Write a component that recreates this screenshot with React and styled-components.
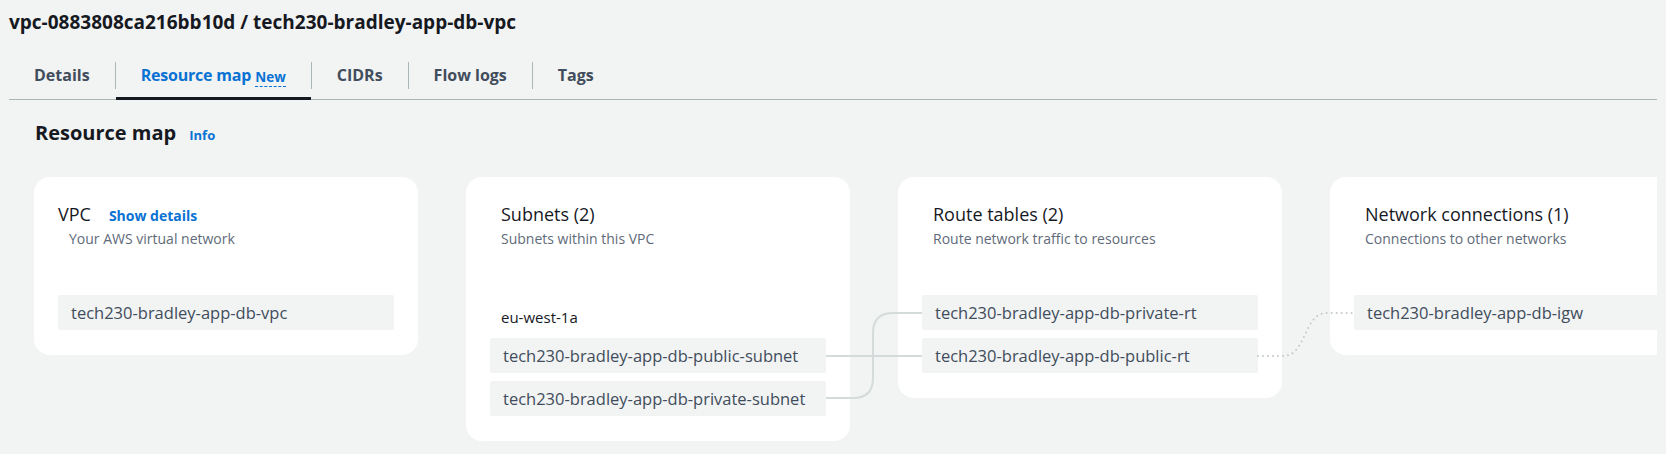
import React from 'react';
import styled, { createGlobalStyle } from 'styled-components';

const GlobalStyle = createGlobalStyle`
  body {
    margin: 0;
    background: #f2f3f3;
    font-family: "Open Sans", "Helvetica Neue", Arial, sans-serif;
    color: #16191f;
  }
`;

const Page = styled.div`
  padding: 0 9px;
  overflow: hidden;
`;

const Title = styled.h1`
  margin: 0;
  padding-top: 2px;
  height: 40px;
  line-height: 40px;
  font-size: 19px;
  font-weight: 700;
  color: #16191f;
`;

const TabBar = styled.div`
  display: flex;
  align-items: stretch;
  margin-top: 16px;
  height: 41px;
  border-bottom: 1px solid #aab7b8;
`;

const Tab = styled.div`
  display: flex;
  align-items: center;
  padding: 0 25px 6px;
  font-size: 16px;
  font-weight: 700;
  letter-spacing: ${p => (p.$active ? '-0.2px' : '0')};
  color: ${p => (p.$active ? '#0972d3' : '#414d5c')};
  border-bottom: 3px solid ${p => (p.$active ? '#16191f' : 'transparent')};
  margin-bottom: -1px;
`;

const Separator = styled.span`
  align-self: center;
  width: 1px;
  height: 27px;
  margin-bottom: 6px;
  background: #aab7b8;
`;

const NewBadge = styled.span`
  margin-left: 4px;
  margin-top: 6px;
  font-size: 13.5px;
  line-height: 17px;
  letter-spacing: 0;
  border-bottom: 1px dashed #0972d3;
`;

const SectionHeader = styled.div`
  display: flex;
  align-items: baseline;
  gap: 13px;
  padding: 19px 0 0 26px;
  height: 47px;
  box-sizing: border-box;
`;

const SectionTitle = styled.h2`
  margin: 0;
  font-size: 20px;
  font-weight: 700;
  color: #16191f;
`;

const Link = styled.a`
  font-size: ${p => p.$size || 13}px;
  font-weight: 700;
  color: #0972d3;
  text-decoration: none;
`;

const MapArea = styled.div`
  position: relative;
  margin-top: 30px;
  overflow: hidden;
  height: 270px;
`;

const CardRow = styled.div`
  display: flex;
  align-items: flex-start;
  gap: 48px;
  padding-left: 25px;
  width: max-content;
`;

const Card = styled.div`
  width: 384px;
  box-sizing: border-box;
  background: #ffffff;
  border-radius: 16px;
  padding: 26px 24px 25px;
`;

const CardHeader = styled.div`
  height: 92px;
  padding-left: ${p => (p.$flush ? '0' : '11px')};
`;

const CardTitleRow = styled.div`
  display: flex;
  align-items: baseline;
  gap: 18px;
`;

const CardTitle = styled.div`
  font-size: 18px;
  line-height: 22px;
  color: #16191f;
`;

const CardSubtitle = styled.div`
  margin-top: 5px;
  padding-left: ${p => (p.$indent ? '11px' : '0')};
  font-size: 14px;
  line-height: 18px;
  color: #5f6b7a;
`;

const ItemList = styled.div`
  display: flex;
  flex-direction: column;
  gap: 8px;
`;

const ZoneLabel = styled.div`
  padding: 10px 0 1px 11px;
  font-size: 15px;
  line-height: 24px;
  color: #16191f;
`;

const Item = styled.div`
  height: 35px;
  display: flex;
  align-items: center;
  padding: 0 13px;
  background: #f2f3f3;
  border-radius: 2px;
  font-size: 16.5px;
  color: #414d5c;
  white-space: nowrap;
`;

const Connectors = styled.svg`
  position: absolute;
  left: 0;
  top: 0;
  pointer-events: none;
`;

const tabs = ['Details', 'Resource map', 'CIDRs', 'Flow logs', 'Tags'];

const cards = [
  {
    title: 'Route tables (2)',
    subtitle: 'Route network traffic to resources',
    items: ['tech230-bradley-app-db-private-rt', 'tech230-bradley-app-db-public-rt'],
  },
  {
    title: 'Network connections (1)',
    subtitle: 'Connections to other networks',
    items: ['tech230-bradley-app-db-igw'],
  },
];

const App = () => {
  return (
    <Page>
      <GlobalStyle />
      <Title>vpc-0883808ca216bb10d / tech230-bradley-app-db-vpc</Title>
      <TabBar>
        {tabs.map((t, i) => (
          <React.Fragment key={t}>
            {i > 0 && <Separator />}
            <Tab $active={t === 'Resource map'}>
              {t}
              {t === 'Resource map' && <NewBadge>New</NewBadge>}
            </Tab>
          </React.Fragment>
        ))}
      </TabBar>

      <SectionHeader>
        <SectionTitle>Resource map</SectionTitle>
        <Link href="#">Info</Link>
      </SectionHeader>

      <MapArea>
        <CardRow>
          <Card>
            <CardHeader $flush>
              <CardTitleRow>
                <CardTitle>VPC</CardTitle>
                <Link href="#" $size={14}>Show details</Link>
              </CardTitleRow>
              <CardSubtitle $indent>Your AWS virtual network</CardSubtitle>
            </CardHeader>
            <ItemList>
              <Item>tech230-bradley-app-db-vpc</Item>
            </ItemList>
          </Card>

          <Card>
            <CardHeader>
              <CardTitle>Subnets (2)</CardTitle>
              <CardSubtitle>Subnets within this VPC</CardSubtitle>
            </CardHeader>
            <ItemList>
              <ZoneLabel>eu-west-1a</ZoneLabel>
              <Item>tech230-bradley-app-db-public-subnet</Item>
              <Item>tech230-bradley-app-db-private-subnet</Item>
            </ItemList>
          </Card>

          {cards.map(c => (
            <Card key={c.title}>
              <CardHeader>
                <CardTitle>{c.title}</CardTitle>
                <CardSubtitle>{c.subtitle}</CardSubtitle>
              </CardHeader>
              <ItemList>
                {c.items.map(it => (
                  <Item key={it}>{it}</Item>
                ))}
              </ItemList>
            </Card>
          ))}
        </CardRow>

        <Connectors width="1648" height="270">
          <g fill="none" stroke="#d5dbdb" strokeWidth="2">
            <path d="M817 179 L913 179" />
            <path d="M817 221 L844 221 Q864 221 864 201 L864 156 Q864 136 884 136 L913 136" />
          </g>
          <path
            d="M1249 179 L1274 179 C1298 179 1294 136 1318 136 L1345 136"
            fill="none"
            stroke="#c3c9c9"
            strokeWidth="2"
            strokeLinecap="round"
            strokeDasharray="0 5"
          />
        </Connectors>
      </MapArea>
    </Page>
  );
};

export default App;
